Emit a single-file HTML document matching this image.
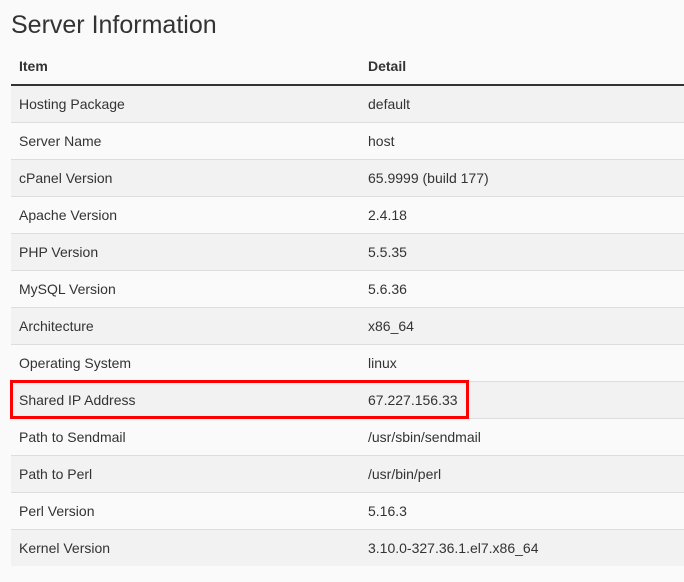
<!DOCTYPE html>
<html><head><style>
body{margin:0;background:#fafafa;font-family:"Liberation Sans",sans-serif;color:#333;width:684px;height:582px;overflow:hidden;position:relative}
h1{position:absolute;left:11px;top:11px;margin:0;font-size:25px;font-weight:normal;color:#333}
table{position:absolute;left:11px;top:47px;width:673px;border-collapse:collapse;font-size:14px}
th{text-align:left;font-weight:bold;height:37px;padding:0 0 0 8px;border-bottom:2px solid #333}
td{height:36px;padding:0 0 0 8px;border-top:1px solid #ddd}
td:first-child,th:first-child{width:341px}
tr:nth-child(odd) td{background:#f2f2f2}
tr:nth-child(even) td{background:#fafafa}
.box{position:absolute;left:10px;top:380px;width:453px;height:33px;border:3px solid #f00}
</style></head><body>
<h1>Server Information</h1>
<table>
<thead><tr><th>Item</th><th>Detail</th></tr></thead>
<tbody>
<tr><td>Hosting Package</td><td>default</td></tr>
<tr><td>Server Name</td><td>host</td></tr>
<tr><td>cPanel Version</td><td>65.9999 (build 177)</td></tr>
<tr><td>Apache Version</td><td>2.4.18</td></tr>
<tr><td>PHP Version</td><td>5.5.35</td></tr>
<tr><td>MySQL Version</td><td>5.6.36</td></tr>
<tr><td>Architecture</td><td>x86_64</td></tr>
<tr><td>Operating System</td><td>linux</td></tr>
<tr><td>Shared IP Address</td><td>67.227.156.33</td></tr>
<tr><td>Path to Sendmail</td><td>/usr/sbin/sendmail</td></tr>
<tr><td>Path to Perl</td><td>/usr/bin/perl</td></tr>
<tr><td>Perl Version</td><td>5.16.3</td></tr>
<tr><td>Kernel Version</td><td>3.10.0-327.36.1.el7.x86_64</td></tr>
</tbody></table>
<div class="box"></div>
</body></html>
